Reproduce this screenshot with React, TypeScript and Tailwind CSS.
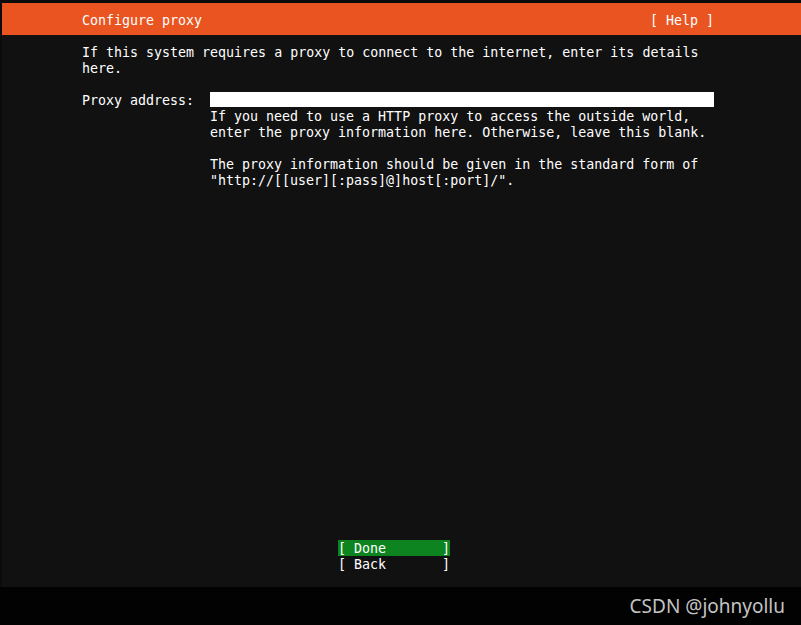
const mono = "font-['DejaVu_Sans_Mono','Liberation_Mono',monospace] text-[13.3px] leading-[16px]";

const App = () => {
  return (
    <div className="flex h-[625px] w-full flex-col bg-[#020202]">
      <div className="flex h-[587px] flex-col border-l-2 border-t-[3px] border-[#0b0b0b] bg-[#111111] text-white">
        <header className={`flex h-[32px] items-center justify-between bg-[#e95420] pl-[80px] pr-[87px] pt-[4px] ${mono}`}>
          <span>Configure proxy</span>
          <span className="whitespace-pre">[ Help ]</span>
        </header>

        <div className={`mt-[9px] w-[712px] pl-[80px] ${mono}`}>
          <p className="translate-y-[1px]">
            If this system requires a proxy to connect to the internet, enter its details
            <br />
            here.
          </p>

          <div className="mt-[16px] flex">
            <label className="w-[128px] shrink-0 translate-y-[1px] whitespace-pre">Proxy address:</label>
            <div className="flex-1">
              <input
                type="text"
                className="mb-[1px] block h-[15px] w-[504px] bg-white text-black outline-none"
              />
              <p className="translate-y-[1px]">
                If you need to use a HTTP proxy to access the outside world,
                <br />
                enter the proxy information here. Otherwise, leave this blank.
              </p>
              <p className="mt-[16px] translate-y-[1px]">
                The proxy information should be given in the standard form of
                <br />
                "http://[[user][:pass]@]host[:port]/".
              </p>
            </div>
          </div>
        </div>

        <div className="flex-1" />

        <div className={`mb-[15px] flex flex-col pl-[336px] ${mono}`}>
          <button className="w-[112px] whitespace-pre bg-[#0e8420] pt-[1px] text-left leading-[15px]">[ Done       ]</button>
          <button className="w-[112px] whitespace-pre pt-[1px] text-left leading-[15px]">[ Back       ]</button>
        </div>
      </div>

      <div className="flex flex-1 items-center justify-end pr-[16px]">
        <span className="font-['Noto_Sans','Open_Sans',sans-serif] text-[19px] text-[#c4c4c4]">
          CSDN @johnyollu
        </span>
      </div>
    </div>
  );
};

export default App;
